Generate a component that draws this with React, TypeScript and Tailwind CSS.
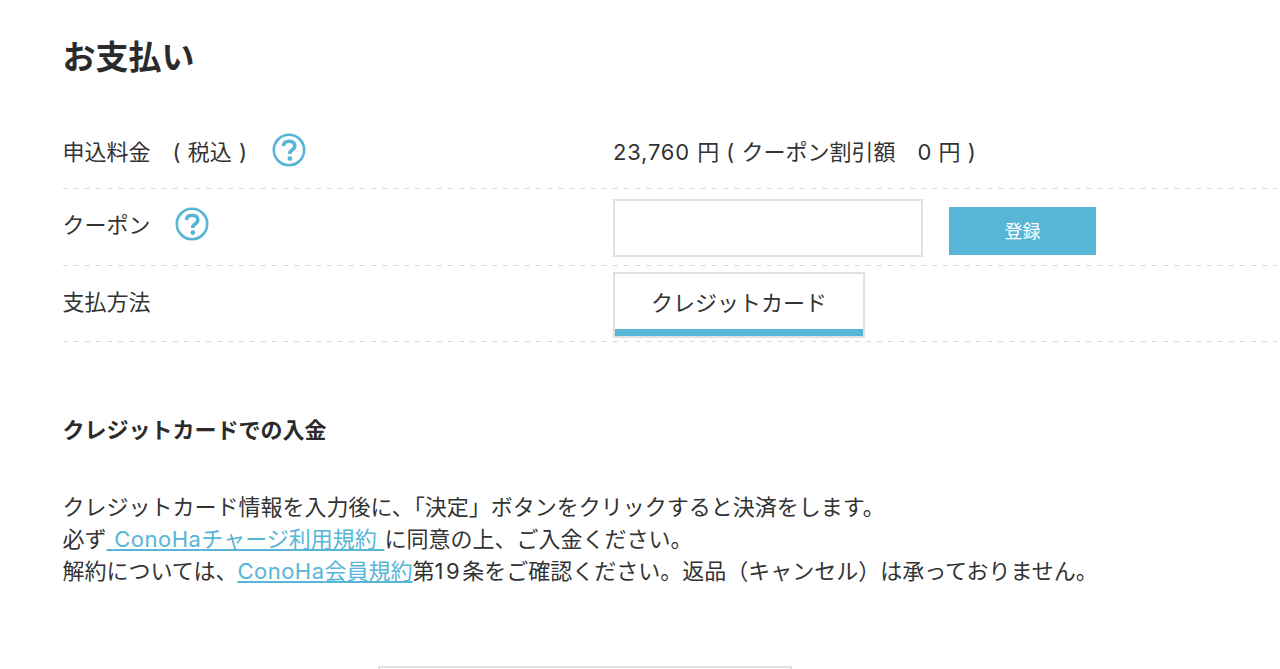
const jp = "font-['Inter','Noto_Sans_CJK_JP',sans-serif]";

function HelpIcon() {
  return (
    <svg width="34" height="34" viewBox="0 0 34 34" className="shrink-0">
      <circle cx="17" cy="17" r="15.2" fill="#fff" stroke="#57b5d6" strokeWidth="2.6" />
      <path d="M11.4 13c.3-3 2.7-4.8 5.8-4.8 3.3 0 5.6 1.8 5.6 4.5 0 2-1 3.1-2.7 4.2-1.6 1-2.2 1.7-2.2 3.2v.9" fill="none" stroke="#57b5d6" strokeWidth="3.6" />
      <circle cx="17.9" cy="25.6" r="2.4" fill="#57b5d6" />
    </svg>
  );
}

function Dashes() {
  return <div className="h-px w-full bg-[repeating-linear-gradient(90deg,#d9d9d9_0_5px,transparent_5px_11px)]" />;
}

export default function App() {
  return (
    <div className={`h-[669px] overflow-hidden bg-white pl-[62.5px] pr-[3px] text-[22px] text-[#333] ${jp}`}>
      <h1 className="pt-[34px] text-[33px] leading-[46px] font-bold text-[#2b2b2b]">お支払い</h1>

      <div className="mt-[28px] flex h-[80px] items-center">
        <div className="flex w-[550.5px] translate-y-[4px] items-center">
          <span className="whitespace-pre [word-spacing:1px]">申込料金　( 税込 )</span>
          <span className="ml-[25px] -translate-y-[2px]"><HelpIcon /></span>
        </div>
        <div className="translate-y-[4px] whitespace-pre [word-spacing:1px]">
          <span className="tracking-[0.8px]">23,760</span> 円 ( クーポン割引額　0 円 )
        </div>
      </div>
      <Dashes />

      <div className="flex h-[76px] items-center">
        <div className="flex w-[550.5px] -translate-y-[2px] items-center">
          <span>クーポン</span>
          <span className="ml-[24px] -translate-y-[1px]"><HelpIcon /></span>
        </div>
        <input className="mt-[1px] h-[58px] w-[310px] border-2 border-[#e0e0e0] bg-white" />
        <button className="mt-[8px] ml-[26px] h-[48px] w-[147px] bg-[#57b5d6] text-[18px] text-white">登録</button>
      </div>
      <Dashes />

      <div className="flex h-[75px] items-center">
        <div className="w-[550.5px] -translate-y-[1px]">支払方法</div>
        <div className="mt-[3px] flex h-[66px] w-[252px] flex-col border-2 border-[#e0e0e0]">
          <div className="flex flex-1 translate-y-[2px] items-center justify-center">クレジットカード</div>
          <div className="h-[7px] bg-[#57b5d6]" />
        </div>
      </div>
      <Dashes />

      <h2 className="mt-[72px] text-[22px] leading-[32px] font-bold text-[#2b2b2b]">クレジットカードでの入金</h2>

      <div className="mt-[45px] leading-[32px]">
        <p>クレジットカード情報を入力後に、「決定」ボタンをクリックすると決済をします。</p>
        <p>
          必ず
          <a href="#" className="text-[#57b5d6] underline [word-spacing:1.5px]"> <span className="tracking-[0.5px]">ConoHa</span>チャージ利用規約 </a>
          に同意の上、ご入金ください。
        </p>
        <p>
          解約については、
          <a href="#" className="text-[#57b5d6] underline"><span className="tracking-[0.5px]">ConoHa</span>会員規約</a>
          第<span className="tracking-[2.5px]">19</span>条をご確認ください。返品（キャンセル）は承っておりません。
        </p>
      </div>

      <div className="mt-[79px] ml-[315.5px] h-[60px] w-[414px] border-2 border-[#e0e0e0]" />
    </div>
  );
}
